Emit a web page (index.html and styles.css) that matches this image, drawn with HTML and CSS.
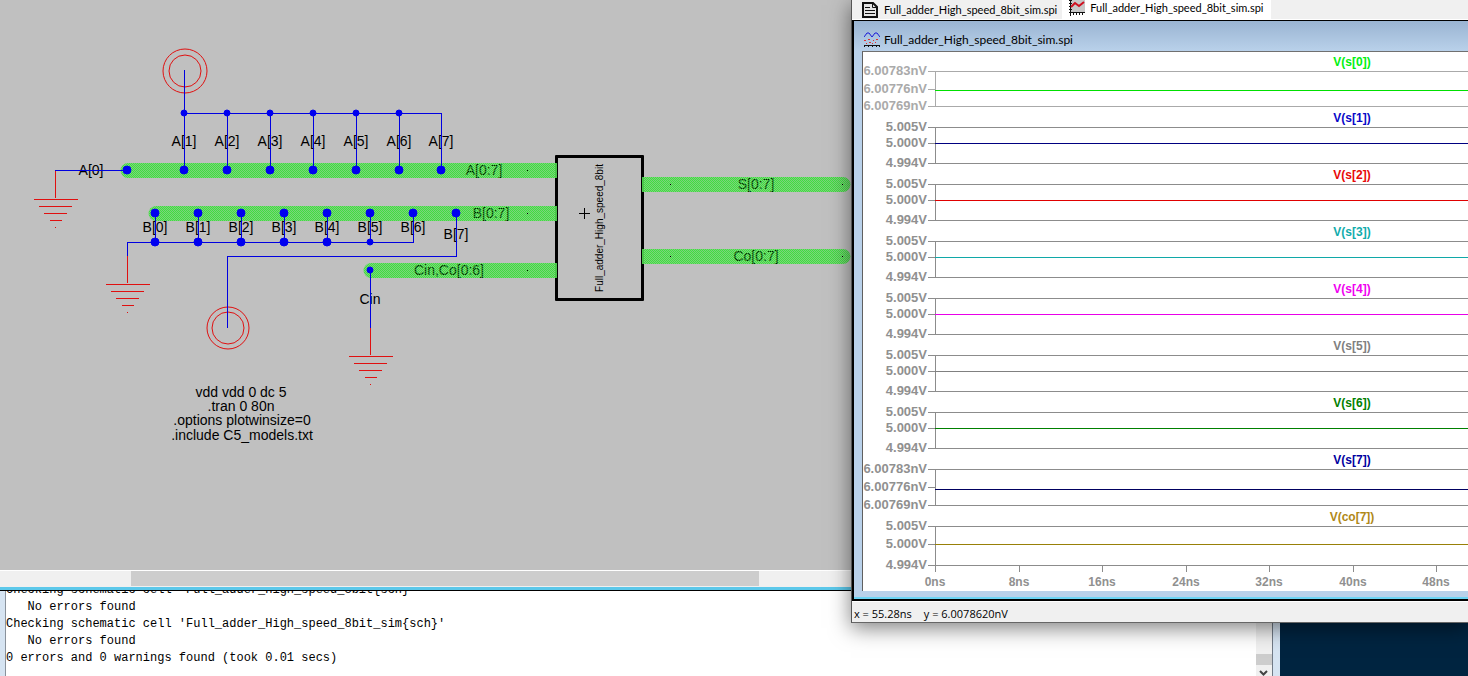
FILE: index.html
```html
<!DOCTYPE html>
<html lang="en">
<head>
<meta charset="utf-8">
<title>Full_adder_High_speed_8bit_sim</title>
<link rel="stylesheet" href="styles.css">
</head>
<body>
<main class="desktop">

<section class="messages" aria-label="Messages">
<pre class="log">Checking schematic cell 'Full_adder_High_speed_8bit{sch}'
   No errors found
Checking schematic cell 'Full_adder_High_speed_8bit_sim{sch}'
   No errors found
0 errors and 0 warnings found (took 0.01 secs)</pre>
<div class="vscroll">
<div class="vthumb"></div>
<svg class="chevron" width="9" height="6" viewBox="0 0 9 6"><path d="M1 1l3.500 3.500L8 1" fill="none" stroke="#444" stroke-width="2"/></svg>
</div>
</section>

<section class="schematic" aria-label="Schematic">
<svg class="canvas" height="570">
<defs>
<pattern id="dither" width="2" height="2" patternUnits="userSpaceOnUse">
<rect width="2" height="2" fill="#6cd86c" opacity=".8"/>
<rect width="1" height="1" fill="#40de40"/><rect x="1" y="1" width="1" height="1" fill="#40de40"/>
</pattern>
<pattern id="ink" width="2" height="2" patternUnits="userSpaceOnUse">
<rect width="2" height="2" fill="#063006" opacity=".4"/>
<rect x="1" width="1" height="1" fill="#021802"/><rect y="1" width="1" height="1" fill="#021802"/>
</pattern>
<g id="ground"><path d="M0 0V28M-21 29H23M-16 36H17M-11 43H12M-5 50H7M0 57H1"/></g>
</defs>
<rect x="555" y="155" width="89" height="146" rx="1"/>
<rect x="558" y="158" width="83" height="140" fill="#c0c0c0"/>
<g fill="url(#dither)">
<path d="M128 163H557V178H128A7 7 0 0 1 128 163Z"/>
<path d="M156 206H557V221H156A7 7 0 0 1 156 206Z"/>
<path d="M371 263H557V278H371A7 7 0 0 1 371 263Z"/>
<path d="M642 177H843A7 7 0 0 1 843 192H642Z"/>
<path d="M642 249H843A7 7 0 0 1 843 264H642Z"/>
</g>
<g class="dots"><path d="M527 170h1M527 213h1M527 270h1M670 184h1M842 184h1M670 256h1M842 256h1"/></g>
<g class="ink">
<text x="484" y="175">A[0:7]</text>
<text x="491" y="218">B[0:7]</text>
<text x="449" y="275">Cin,Co[0:6]</text>
<text x="756" y="189">S[0:7]</text>
<text x="756" y="261">Co[0:7]</text>
</g>
<g class="label">
<text x="91" y="175">A[0]</text>
<text x="184" y="146">A[1]</text><text x="227" y="146">A[2]</text><text x="270" y="146">A[3]</text><text x="313" y="146">A[4]</text><text x="356" y="146">A[5]</text><text x="399" y="146">A[6]</text><text x="441" y="146">A[7]</text>
<text x="155" y="232">B[0]</text><text x="198" y="232">B[1]</text><text x="241" y="232">B[2]</text><text x="284" y="232">B[3]</text><text x="327" y="232">B[4]</text><text x="370" y="232">B[5]</text><text x="413" y="232">B[6]</text><text x="456" y="239">B[7]</text>
<text x="370" y="304">Cin</text>
<text x="241" y="397">vdd vdd 0 dc 5</text>
<text x="241" y="411">.tran 0 80n</text>
<text x="242" y="425">.options plotwinsize=0</text>
<text x="242" y="440">.include C5_models.txt</text>
<text class="small" transform="translate(603 228) rotate(-90)">Full_adder_High_speed_8bit</text>
</g>
<path class="cross" d="M579 213H590M584 208V219"/>
<g class="sym">
<use href="#ground" x="55" y="170"/><use href="#ground" x="127" y="255"/><use href="#ground" x="370" y="327"/>
</g>
<g class="ring"><circle cx="185" cy="71" r="22"/><circle cx="185" cy="71" r="16"/><circle cx="228" cy="328" r="21"/><circle cx="228" cy="328" r="16"/></g>
<g class="wire"><path d="M184 70V170M184 113H441V170M227 113V170M270 113V170M313 113V170M356 113V170M399 113V170M55 170H127M127 256V242H413V213M155 213V242M198 213V242M241 213V242M284 213V242M327 213V242M370 213V242M227 328V256H456V213M370 270V328"/></g>
<g class="node">
<circle cx="127" cy="170" r="4"/><circle cx="184" cy="170" r="4"/><circle cx="227" cy="170" r="4"/><circle cx="270" cy="170" r="4"/><circle cx="313" cy="170" r="4"/><circle cx="356" cy="170" r="4"/><circle cx="399" cy="170" r="4"/><circle cx="441" cy="170" r="4"/>
<circle cx="155" cy="213" r="4"/><circle cx="198" cy="213" r="4"/><circle cx="241" cy="213" r="4"/><circle cx="284" cy="213" r="4"/><circle cx="327" cy="213" r="4"/><circle cx="370" cy="213" r="4"/><circle cx="413" cy="213" r="4"/><circle cx="456" cy="213" r="4"/>
<circle cx="155" cy="242" r="4"/><circle cx="198" cy="242" r="4"/><circle cx="241" cy="242" r="4"/><circle cx="284" cy="242" r="4"/><circle cx="327" cy="242" r="4"/>
<circle cx="184" cy="113" r="3"/><circle cx="227" cy="113" r="3"/><circle cx="270" cy="113" r="3"/><circle cx="313" cy="113" r="3"/><circle cx="356" cy="113" r="3"/><circle cx="399" cy="113" r="3"/>
<circle cx="370" cy="242" r="3"/><circle cx="370" cy="270" r="3"/>
</g>
</svg>
<div class="hscroll"><div class="hthumb"></div></div>
</section>

<section class="spice" aria-label="Waveform viewer">
<nav class="tabs">
<button class="tab" type="button">
<svg width="16" height="16" viewBox="0 0 16 16"><path d="M1 1H11L15 5V15H1Z" fill="#e4e4e4" stroke="#111" stroke-width="2"/><path d="M10.500 1V5.500H15M3 5.500H8M3 8.500H13M3 11.500H13" fill="none" stroke="#111"/></svg>
<span>Full_adder_High_speed_8bit_sim.spi</span></button>
<button class="tab active" type="button">
<svg width="16" height="16" viewBox="0 0 16 16"><path d="M1 0H16V13H1Z" fill="#c8c8c8"/><path d="M1.500 0V16M0 12.500H16M0 .500H3M0 3.500H3M0 6.500H3M0 9.500H3M4.500 12V15M7.500 12V15M10.500 12V15M13.500 12V15" stroke="#111" fill="none"/><path d="M2 7L6 3L10 6L15 2" fill="none" stroke="#d01020" stroke-width="2"/></svg>
<span>Full_adder_High_speed_8bit_sim.spi</span></button>
</nav>
<div class="child">
<header class="titlebar">
<svg width="16" height="16" viewBox="0 0 16 16"><path d="M0 5L3 1L5 1L8 5L11 1L13 1L16 5" fill="none" stroke="#1a1ad8"/><path d="M0 8.500H2M4 7.500H6M9 8.500H10M12 7.500H14M2 11.500H3M5 10.500H7M8 11.500H9M11 10.500H12" stroke="#e03030" fill="none"/><path d="M0 13.500H16M.500 13V15M4.500 13V15M8.500 13V15M12.500 13V15M15.500 13V15" stroke="#111" fill="none"/></svg>
<span>Full_adder_High_speed_8bit_sim.spi</span>
</header>
<div class="plot">
<svg class="waves" height="539">
<g class="pale">
<path class="axis" d="M65 19H72M65 37H72M65 54H72M72 19V54"/>
<line class="axis" x1="72" x2="100%" y1="19" y2="19"/><line class="axis" x1="72" x2="100%" y1="54" y2="54"/>
<line x1="72" x2="100%" y1="38" y2="38" stroke="#00e000"/>
<text x="64" y="23">6.00783nV</text><text x="64" y="41">6.00776nV</text><text x="64" y="58">6.00769nV</text>
</g>
<g transform="translate(0 75)"><path class="axis" d="M65 0H72M65 16H72M65 36H72M72 0V36"/><line class="axis" x1="72" x2="100%" y1="0" y2="0"/><line class="axis" x1="72" x2="100%" y1="36" y2="36"/><line x1="72" x2="100%" y1="16" y2="16" stroke="#000080"/><text x="64" y="4">5.005V</text><text x="64" y="20">5.000V</text><text x="64" y="40">4.994V</text></g>
<g transform="translate(0 132)"><path class="axis" d="M65 0H72M65 16H72M65 36H72M72 0V36"/><line class="axis" x1="72" x2="100%" y1="0" y2="0"/><line class="axis" x1="72" x2="100%" y1="36" y2="36"/><line x1="72" x2="100%" y1="16" y2="16" stroke="#e00000"/><text x="64" y="4">5.005V</text><text x="64" y="20">5.000V</text><text x="64" y="40">4.994V</text></g>
<g transform="translate(0 189)"><path class="axis" d="M65 0H72M65 16H72M65 36H72M72 0V36"/><line class="axis" x1="72" x2="100%" y1="0" y2="0"/><line class="axis" x1="72" x2="100%" y1="36" y2="36"/><line x1="72" x2="100%" y1="16" y2="16" stroke="#10a8a8"/><text x="64" y="4">5.005V</text><text x="64" y="20">5.000V</text><text x="64" y="40">4.994V</text></g>
<g transform="translate(0 246)"><path class="axis" d="M65 0H72M65 16H72M65 36H72M72 0V36"/><line class="axis" x1="72" x2="100%" y1="0" y2="0"/><line class="axis" x1="72" x2="100%" y1="36" y2="36"/><line x1="72" x2="100%" y1="16" y2="16" stroke="#e800e8"/><text x="64" y="4">5.005V</text><text x="64" y="20">5.000V</text><text x="64" y="40">4.994V</text></g>
<g transform="translate(0 303)"><path class="axis" d="M65 0H72M65 16H72M65 36H72M72 0V36"/><line class="axis" x1="72" x2="100%" y1="0" y2="0"/><line class="axis" x1="72" x2="100%" y1="36" y2="36"/><line x1="72" x2="100%" y1="16" y2="16" stroke="#808080"/><text x="64" y="4">5.005V</text><text x="64" y="20">5.000V</text><text x="64" y="40">4.994V</text></g>
<g transform="translate(0 360)"><path class="axis" d="M65 0H72M65 16H72M65 36H72M72 0V36"/><line class="axis" x1="72" x2="100%" y1="0" y2="0"/><line class="axis" x1="72" x2="100%" y1="36" y2="36"/><line x1="72" x2="100%" y1="16" y2="16" stroke="#008000"/><text x="64" y="4">5.005V</text><text x="64" y="20">5.000V</text><text x="64" y="40">4.994V</text></g>
<g transform="translate(0 417)"><path class="axis" d="M65 0H72M65 18H72M65 36H72M72 0V36"/><line class="axis" x1="72" x2="100%" y1="0" y2="0"/><line class="axis" x1="72" x2="100%" y1="36" y2="36"/><line x1="72" x2="100%" y1="20" y2="20" stroke="#000060"/><text x="64" y="4">6.00783nV</text><text x="64" y="22">6.00776nV</text><text x="64" y="40">6.00769nV</text></g>
<g transform="translate(0 474)"><path class="axis" d="M65 0H72M65 18H72M65 39H72M72 0V46M156 39V46M239 39V46M323 39V46M406 39V46M490 39V46M573 39V46"/><line class="axis" x1="72" x2="100%" y1="0" y2="0"/><line class="axis" x1="72" x2="100%" y1="39" y2="39"/><line x1="72" x2="100%" y1="18" y2="18" stroke="#988008"/><text x="64" y="4">5.005V</text><text x="64" y="22">5.000V</text><text x="64" y="43">4.994V</text></g>
<g class="mid"><text x="72" y="534">0ns</text><text x="156" y="534">8ns</text><text x="239" y="534">16ns</text><text x="323" y="534">24ns</text><text x="406" y="534">32ns</text><text x="490" y="534">40ns</text><text x="573" y="534">48ns</text></g>
<g class="mid">
<text x="489" y="14" fill="#00f010">V(s[0])</text><text x="489" y="70" fill="#0808c8">V(s[1])</text><text x="489" y="127" fill="#e80808">V(s[2])</text><text x="489" y="184" fill="#10acac">V(s[3])</text><text x="489" y="241" fill="#f000f0">V(s[4])</text><text x="489" y="298" fill="#808080">V(s[5])</text><text x="489" y="355" fill="#008000">V(s[6])</text><text x="489" y="412" fill="#0000a0">V(s[7])</text><text x="489" y="469" fill="#b08818">V(co[7])</text>
</g>
</svg>
</div>
</div>
<footer class="status"><span>x = 55.28ns</span><span>y = 6.0078620nV</span></footer>
</section>

</main>
</body>
</html>
```

FILE: styles.css
```css
* { box-sizing: border-box; }
body { margin: 0; font-family: "Liberation Sans", Arial, sans-serif; }
button { font: inherit; color: inherit; border: 0; margin: 0; }
svg { display: block; flex: none; }

.desktop { position: relative; min-height: 100vh; overflow: hidden; background: #002440; }

/* message log */
.messages { position: absolute; left: 0; top: 582px; bottom: 0; width: 1280px; display: flex; background: #fff; border-left: 5px solid #d6e4f2; border-right: 7px solid #d6e4f2; }
.log { flex: 1; margin: 0; border-left: 1px solid #8a929c; font: 12px/17px "Liberation Mono", "Courier New", monospace; color: #000; overflow: hidden; }
.vscroll { width: 17px; background: #f0f0f0; border-right: 1px solid #707a86; display: flex; flex-direction: column; justify-content: flex-end; gap: 5px; }
.vthumb { height: 11px; background: #cdcdcd; }
.chevron { margin: 0 3px; }

/* schematic window */
.schematic { position: absolute; left: 0; top: 0; width: 859px; background: #c0c0c0; border-bottom: 1px solid #000; }
.canvas { width: 100%; }
.hscroll { height: 20px; padding: 0 100px 0 131px; background: #f0f0f0; border-top: 1px solid #fff; border-bottom: 3px solid #5cc8ea; }
.hthumb { height: 15px; background: #cdcdcd; }
.label, .ink { font-size: 14px; text-anchor: middle; }
.ink { fill: url(#ink); }
.small { font-size: 10px; }
.wire, .sym, .cross, .dots { fill: none; shape-rendering: crispEdges; }
.wire { stroke: #0000e0; }
.sym { stroke: #e01010; }
.ring { fill: none; stroke: #e01010; }
.cross, .dots { stroke: #000; }
.node { fill: #0000f0; stroke: #0000f0; }

/* waveform window */
.spice { position: absolute; left: 851px; right: 0; top: 0; display: flex; flex-direction: column; background: #f0f0f0; border-left: 1px solid #555; border-bottom: 1px solid #666; box-shadow: 0 5px 20px rgba(0, 0, 0, .5); font-family: Lato, sans-serif; color: #000; }
.tabs { display: flex; height: 20px; padding-left: 5px; border-bottom: 1px solid #fff; }
.tab { display: flex; align-items: center; gap: 6px; padding: 0 5px; background: #f0f0f0; font-size: 11px; line-height: 16px; white-space: nowrap; }
.tab.active { background: #fff; padding: 0 7px 3px; gap: 5px; }
.child { border: solid #000; border-width: 1px 0 2px 2px; padding-left: 8px; background: linear-gradient(#9ab4d2, #b9d1ea 30px, #b9d1ea); box-shadow: inset 0 -2px #6cd4f4; }
.titlebar { display: flex; align-items: center; gap: 4px; height: 30px; padding: 8px 0 0 2px; font-size: 12px; line-height: 16px; white-space: nowrap; }
.plot { background: #fff; border-top: 1px solid #707070; border-left: 1px solid #606060; margin-bottom: 8px; overflow: hidden; }
.waves { width: 100%; font: bold 13px "Liberation Sans", Arial, sans-serif; fill: #909090; text-anchor: end; }
.waves line, .axis { stroke-width: 1px; shape-rendering: crispEdges; }
.axis { stroke: #8c8c8c; fill: none; }
.pale { fill: #aaa; }
.pale .axis { stroke: #aaa; }
.mid { text-anchor: middle; font-size: 12px; }
.status { display: flex; gap: 12px; height: 21px; padding-left: 2px; border-top: 1px solid #fff; font: 11px/23px "Open Sans", sans-serif; white-space: pre; }
```
